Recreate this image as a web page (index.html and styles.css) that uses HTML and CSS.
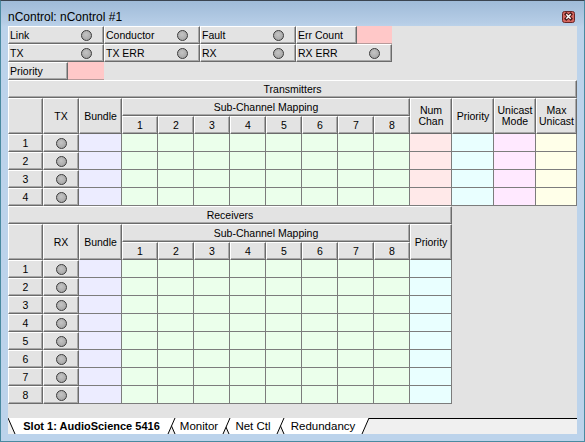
FILE: index.html
```html
<!DOCTYPE html>
<html>
<head>
<meta charset="utf-8">
<title>nControl</title>
<link rel="stylesheet" href="styles.css">
</head>
<body>
<div class="window">
  <div class="titlebar">
    <span class="title">nControl: nControl #1</span>
    <span class="close">
      <svg width="13" height="12" viewBox="0 0 13 12">
        <rect x="0.5" y="0.5" width="12" height="11" rx="2" fill="#d4665f" stroke="#6a2626"/>
        <path d="M4.3 3.3 L8.7 7.7 M8.7 3.3 L4.3 7.7" stroke="#4a1818" stroke-width="3.2" stroke-linecap="square"/>
        <path d="M4.3 3.3 L8.7 7.7 M8.7 3.3 L4.3 7.7" stroke="#ffffff" stroke-width="1.5"/>
      </svg>
    </span>
  </div>
  <div class="client">
    <div class="status">
      <div class="b st"><span>Link</span><i class="led"></i></div>
      <div class="b st"><span>Conductor</span><i class="led"></i></div>
      <div class="b st"><span>Fault</span><i class="led"></i></div>
      <div class="split e"><div class="b st"><span>Err Count</span></div><div class="pink"></div></div>
      <div class="b st"><span>TX</span><i class="led"></i></div>
      <div class="b st"><span>TX ERR</span><i class="led"></i></div>
      <div class="b st"><span>RX</span><i class="led"></i></div>
      <div class="b st"><span>RX ERR</span><i class="led"></i></div>
      <div class="split"><div class="b st"><span>Priority</span></div><div class="pink"></div></div>
    </div>

    <div class="b bar full">Transmitters</div>
    <div class="grid txg">
      <div class="b h2"></div>
      <div class="b h2">TX</div>
      <div class="b h2">Bundle</div>
      <div class="b span8">Sub-Channel Mapping</div>
      <div class="b h2">Num<br>Chan</div>
      <div class="b h2">Priority</div>
      <div class="b h2">Unicast<br>Mode</div>
      <div class="b h2">Max<br>Unicast</div>
      <div class="b">1</div><div class="b">2</div><div class="b">3</div><div class="b">4</div>
      <div class="b">5</div><div class="b">6</div><div class="b">7</div><div class="b">8</div>

      <div class="b">1</div><div class="b"><i class="led"></i></div><div class="d bu"></div>
      <div class="d ch"></div><div class="d ch"></div><div class="d ch"></div><div class="d ch"></div>
      <div class="d ch"></div><div class="d ch"></div><div class="d ch"></div><div class="d ch"></div>
      <div class="d nc"></div><div class="d pr"></div><div class="d um"></div><div class="d mu"></div>

      <div class="b">2</div><div class="b"><i class="led"></i></div><div class="d bu"></div>
      <div class="d ch"></div><div class="d ch"></div><div class="d ch"></div><div class="d ch"></div>
      <div class="d ch"></div><div class="d ch"></div><div class="d ch"></div><div class="d ch"></div>
      <div class="d nc"></div><div class="d pr"></div><div class="d um"></div><div class="d mu"></div>

      <div class="b">3</div><div class="b"><i class="led"></i></div><div class="d bu"></div>
      <div class="d ch"></div><div class="d ch"></div><div class="d ch"></div><div class="d ch"></div>
      <div class="d ch"></div><div class="d ch"></div><div class="d ch"></div><div class="d ch"></div>
      <div class="d nc"></div><div class="d pr"></div><div class="d um"></div><div class="d mu"></div>

      <div class="b">4</div><div class="b"><i class="led"></i></div><div class="d bu"></div>
      <div class="d ch"></div><div class="d ch"></div><div class="d ch"></div><div class="d ch"></div>
      <div class="d ch"></div><div class="d ch"></div><div class="d ch"></div><div class="d ch"></div>
      <div class="d nc"></div><div class="d pr"></div><div class="d um"></div><div class="d mu"></div>
    </div>

    <div class="b bar half">Receivers</div>
    <div class="grid rxg">
      <div class="b h2"></div>
      <div class="b h2">RX</div>
      <div class="b h2">Bundle</div>
      <div class="b span8">Sub-Channel Mapping</div>
      <div class="b h2">Priority</div>
      <div class="b">1</div><div class="b">2</div><div class="b">3</div><div class="b">4</div>
      <div class="b">5</div><div class="b">6</div><div class="b">7</div><div class="b">8</div>

      <div class="b">1</div><div class="b"><i class="led"></i></div><div class="d bu"></div>
      <div class="d ch"></div><div class="d ch"></div><div class="d ch"></div><div class="d ch"></div>
      <div class="d ch"></div><div class="d ch"></div><div class="d ch"></div><div class="d ch"></div>
      <div class="d pr"></div>

      <div class="b">2</div><div class="b"><i class="led"></i></div><div class="d bu"></div>
      <div class="d ch"></div><div class="d ch"></div><div class="d ch"></div><div class="d ch"></div>
      <div class="d ch"></div><div class="d ch"></div><div class="d ch"></div><div class="d ch"></div>
      <div class="d pr"></div>

      <div class="b">3</div><div class="b"><i class="led"></i></div><div class="d bu"></div>
      <div class="d ch"></div><div class="d ch"></div><div class="d ch"></div><div class="d ch"></div>
      <div class="d ch"></div><div class="d ch"></div><div class="d ch"></div><div class="d ch"></div>
      <div class="d pr"></div>

      <div class="b">4</div><div class="b"><i class="led"></i></div><div class="d bu"></div>
      <div class="d ch"></div><div class="d ch"></div><div class="d ch"></div><div class="d ch"></div>
      <div class="d ch"></div><div class="d ch"></div><div class="d ch"></div><div class="d ch"></div>
      <div class="d pr"></div>

      <div class="b">5</div><div class="b"><i class="led"></i></div><div class="d bu"></div>
      <div class="d ch"></div><div class="d ch"></div><div class="d ch"></div><div class="d ch"></div>
      <div class="d ch"></div><div class="d ch"></div><div class="d ch"></div><div class="d ch"></div>
      <div class="d pr"></div>

      <div class="b">6</div><div class="b"><i class="led"></i></div><div class="d bu"></div>
      <div class="d ch"></div><div class="d ch"></div><div class="d ch"></div><div class="d ch"></div>
      <div class="d ch"></div><div class="d ch"></div><div class="d ch"></div><div class="d ch"></div>
      <div class="d pr"></div>

      <div class="b">7</div><div class="b"><i class="led"></i></div><div class="d bu"></div>
      <div class="d ch"></div><div class="d ch"></div><div class="d ch"></div><div class="d ch"></div>
      <div class="d ch"></div><div class="d ch"></div><div class="d ch"></div><div class="d ch"></div>
      <div class="d pr"></div>

      <div class="b">8</div><div class="b"><i class="led"></i></div><div class="d bu"></div>
      <div class="d ch"></div><div class="d ch"></div><div class="d ch"></div><div class="d ch"></div>
      <div class="d ch"></div><div class="d ch"></div><div class="d ch"></div><div class="d ch"></div>
      <div class="d pr"></div>
    </div>

    <div class="spacer"></div>

    <div class="tabs">
      <svg class="tabshapes" width="569" height="16" viewBox="0 0 569 16">
        <polygon points="269,0 361,0 354,16 276,16" fill="#ffffff"/>
        <line x1="269" y1="0" x2="276" y2="16" stroke="#000" stroke-width="1"/>
        <line x1="354" y1="16" x2="361" y2="0" stroke="#000" stroke-width="1"/>
        <polygon points="214,0 276,0 269,16 221,16" fill="#ffffff"/>
        <line x1="214" y1="0" x2="221" y2="16" stroke="#000" stroke-width="1"/>
        <line x1="269" y1="16" x2="276" y2="0" stroke="#000" stroke-width="1"/>
        <polygon points="160,0 222,0 215,16 167,16" fill="#ffffff"/>
        <line x1="160" y1="0" x2="167" y2="16" stroke="#000" stroke-width="1"/>
        <line x1="215" y1="16" x2="222" y2="0" stroke="#000" stroke-width="1"/>
        <polygon points="0,0 167,0 160,16 7,16" fill="#ffffff"/>
        <line x1="0" y1="0" x2="7" y2="16" stroke="#000" stroke-width="1"/>
        <line x1="160" y1="16" x2="167" y2="0" stroke="#000" stroke-width="1"/>
        <line x1="361" y1="0.5" x2="569" y2="0.5" stroke="#000" stroke-width="1"/>
      </svg>
      <span class="tab t0 sel">Slot 1: AudioScience 5416</span>
      <span class="tab t1">Monitor</span>
      <span class="tab t2">Net Ctl</span>
      <span class="tab t3">Redundancy</span>
    </div>
  </div>
</div>
</body>
</html>
```

FILE: styles.css
```css
html, body {
  margin: 0;
  padding: 0;
  background: #bcd3eb;
}

.window {
  width: 585px;
  height: 442px;
  box-sizing: border-box;
  border: 1px solid #4a8aa0;
  border-top-color: #3a4450;
  background: linear-gradient(#9fbbd8 0px, #b6cde6 22px, #bcd3eb 26px, #bcd3eb 100%);
  display: flex;
  flex-direction: column;
  padding: 0 7px 7px 7px;
  font-family: "Liberation Sans", Arial, sans-serif;
  font-size: 10.5px;
  color: #000;
}

.titlebar {
  height: 25px;
  box-sizing: border-box;
  padding-top: 7px;
  display: flex;
  align-items: center;
  justify-content: space-between;
}

.title {
  font-family: "Liberation Sans", Arial, sans-serif;
  font-size: 12px;
  color: #000;
}

.close {
  display: flex;
  margin-right: 2px;
}

.client {
  flex: 1;
  background: #e3e3e3;
  display: flex;
  flex-direction: column;
}

/* raised button cell */
.b {
  box-sizing: border-box;
  background: #e3e3e3;
  border: 1px solid;
  border-color: #ffffff #6b6b6b #6b6b6b #ffffff;
  box-shadow: inset -1px -1px 0 #a8a8a8;
  display: flex;
  align-items: center;
  justify-content: center;
  text-align: center;
  line-height: 11px;
}

.led {
  display: block;
  width: 9px;
  height: 9px;
  border: 1px solid #3a3a3a;
  border-radius: 50%;
  background: radial-gradient(circle at 45% 40%, #c4c4c4 0%, #a9a9a9 70%, #8e8e8e 100%);
}

.status {
  display: grid;
  grid-template-columns: repeat(4, 96px);
  grid-auto-rows: 18px;
}

.st {
  justify-content: space-between;
  padding: 0 11px 0 1px;
}

.split {
  display: grid;
  grid-template-columns: 60px 1fr;
}

.split.e {
  grid-template-columns: 61px 1fr;
}

.split .st {
  padding-right: 0;
}

.pink {
  background: #ffc8c8;
  border-bottom: 1px solid #b89a9a;
}

.bar {
  height: 18px;
}

.full {
  width: 569px;
}

.half {
  width: 444px;
}

.grid {
  display: grid;
  grid-auto-rows: 18px;
}

.txg {
  grid-template-columns: 35px 36px 43px repeat(8, 36px) 42px 42px 42px 41px;
}

.rxg {
  grid-template-columns: 35px 36px 43px repeat(8, 36px) 42px;
  width: 444px;
}

.h2 {
  grid-row: span 2;
}

.span8 {
  grid-column: span 8;
}

.d {
  box-shadow: inset -1px -1px 0 #7c7c7c;
}

.bu { background: #ececff; }
.ch { background: #ebffeb; }
.nc { background: #ffe9e9; }
.pr { background: #e9ffff; }
.um { background: #ffe9ff; }
.mu { background: #ffffe9; }

.spacer {
  flex: 1;
}

.tabs {
  position: relative;
  height: 16px;
  background: #f0f0f0;
  display: flex;
  align-items: center;
}

.tabshapes {
  position: absolute;
  left: 0;
  top: 0;
}

.tab {
  position: relative;
  display: block;
  text-align: center;
  font-size: 11.5px;
  line-height: 16px;
  white-space: nowrap;
}

.sel {
  font-weight: bold;
  font-size: 11px;
}

.t0 { width: 167px; }
.t1 { width: 62px; margin-left: -7px; }
.t2 { width: 62px; margin-left: -8px; }
.t3 { width: 92px; margin-left: -7px; }
```
